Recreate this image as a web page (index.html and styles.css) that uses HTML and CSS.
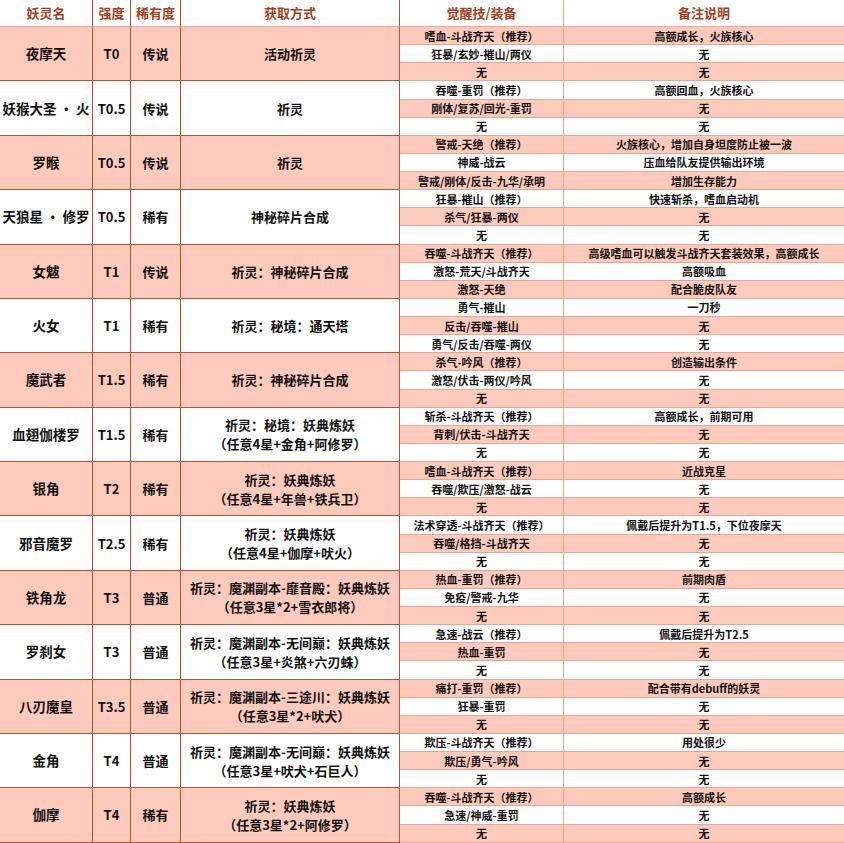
FILE: index.html
```html
<!DOCTYPE html>
<html lang="zh-CN">
<head>
<meta charset="utf-8">
<title>妖灵表</title>
<link rel="stylesheet" href="styles.css">
</head>
<body>
<table class="tbl">
<colgroup>
<col class="c1"><col class="c2"><col class="c3"><col class="c4"><col class="c5"><col class="c6">
</colgroup>
<thead>
<tr class="head">
<th class="dk">妖灵名</th><th class="dk">强度</th><th class="dk">稀有度</th><th class="dk">获取方式</th><th class="lt">觉醒技/装备</th><th class="last">备注说明</th>
</tr>
</thead>
<tbody>
<!-- 1 -->
<tr class="sp"><td rowspan="3" class="g gp name">夜摩天</td><td rowspan="3" class="g gp">T0</td><td rowspan="3" class="g gp">传说</td><td rowspan="3" class="g gp way">活动祈灵</td><td class="sk">嗜血-斗战齐天（推荐）</td><td class="sn">高额成长，火族核心</td></tr>
<tr class="sw"><td class="sk">狂暴/玄妙-摧山/两仪</td><td class="sn">无</td></tr>
<tr class="sp"><td class="sk">无</td><td class="sn">无</td></tr>
<!-- 2 -->
<tr class="sw"><td rowspan="3" class="g gw name">妖猴大圣 · 火</td><td rowspan="3" class="g gw">T0.5</td><td rowspan="3" class="g gw">传说</td><td rowspan="3" class="g gw way">祈灵</td><td class="sk">吞噬-重罚（推荐）</td><td class="sn">高额回血，火族核心</td></tr>
<tr class="sp"><td class="sk">刚体/复苏/回光-重罚</td><td class="sn">无</td></tr>
<tr class="sw"><td class="sk">无</td><td class="sn">无</td></tr>
<!-- 3 -->
<tr class="sp"><td rowspan="3" class="g gp name">罗睺</td><td rowspan="3" class="g gp">T0.5</td><td rowspan="3" class="g gp">传说</td><td rowspan="3" class="g gp way">祈灵</td><td class="sk">警戒-天绝（推荐）</td><td class="sn">火族核心，增加自身坦度防止被一波</td></tr>
<tr class="sw"><td class="sk">神威-战云</td><td class="sn">压血给队友提供输出环境</td></tr>
<tr class="sp"><td class="sk">警戒/刚体/反击-九华/承明</td><td class="sn">增加生存能力</td></tr>
<!-- 4 -->
<tr class="sw"><td rowspan="3" class="g gw name">天狼星 · 修罗</td><td rowspan="3" class="g gw">T0.5</td><td rowspan="3" class="g gw">稀有</td><td rowspan="3" class="g gw way">神秘碎片合成</td><td class="sk">狂暴-摧山（推荐）</td><td class="sn">快速斩杀，嗜血启动机</td></tr>
<tr class="sp"><td class="sk">杀气/狂暴-两仪</td><td class="sn">无</td></tr>
<tr class="sw"><td class="sk">无</td><td class="sn">无</td></tr>
<!-- 5 -->
<tr class="sp"><td rowspan="3" class="g gp name">女魃</td><td rowspan="3" class="g gp">T1</td><td rowspan="3" class="g gp">传说</td><td rowspan="3" class="g gp way">祈灵：神秘碎片合成</td><td class="sk">吞噬-斗战齐天（推荐）</td><td class="sn">高级嗜血可以触发斗战齐天套装效果，高额成长</td></tr>
<tr class="sw"><td class="sk">激怒-荒天/斗战齐天</td><td class="sn">高额吸血</td></tr>
<tr class="sp"><td class="sk">激怒-天绝</td><td class="sn">配合脆皮队友</td></tr>
<!-- 6 -->
<tr class="sw"><td rowspan="3" class="g gw name">火女</td><td rowspan="3" class="g gw">T1</td><td rowspan="3" class="g gw">稀有</td><td rowspan="3" class="g gw way">祈灵：秘境：通天塔</td><td class="sk">勇气-摧山</td><td class="sn">一刀秒</td></tr>
<tr class="sp"><td class="sk">反击/吞噬-摧山</td><td class="sn">无</td></tr>
<tr class="sw"><td class="sk">勇气/反击/吞噬-两仪</td><td class="sn">无</td></tr>
<!-- 7 -->
<tr class="sp"><td rowspan="3" class="g gp name">魔武者</td><td rowspan="3" class="g gp">T1.5</td><td rowspan="3" class="g gp">稀有</td><td rowspan="3" class="g gp way">祈灵：神秘碎片合成</td><td class="sk">杀气-吟风（推荐）</td><td class="sn">创造输出条件</td></tr>
<tr class="sw"><td class="sk">激怒/伏击-两仪/吟风</td><td class="sn">无</td></tr>
<tr class="sp"><td class="sk">无</td><td class="sn">无</td></tr>
<!-- 8 -->
<tr class="sw"><td rowspan="3" class="g gw name">血翅伽楼罗</td><td rowspan="3" class="g gw">T1.5</td><td rowspan="3" class="g gw">稀有</td><td rowspan="3" class="g gw way">祈灵：秘境：妖典炼妖<br>（任意4星+金角+阿修罗）</td><td class="sk">斩杀-斗战齐天（推荐）</td><td class="sn">高额成长，前期可用</td></tr>
<tr class="sp"><td class="sk">背刺/伏击-斗战齐天</td><td class="sn">无</td></tr>
<tr class="sw"><td class="sk">无</td><td class="sn">无</td></tr>
<!-- 9 -->
<tr class="sp"><td rowspan="3" class="g gp name">银角</td><td rowspan="3" class="g gp">T2</td><td rowspan="3" class="g gp">稀有</td><td rowspan="3" class="g gp way">祈灵：妖典炼妖<br>（任意4星+年兽+铁兵卫）</td><td class="sk">嗜血-斗战齐天（推荐）</td><td class="sn">近战克星</td></tr>
<tr class="sw"><td class="sk">吞噬/欺压/激怒-战云</td><td class="sn">无</td></tr>
<tr class="sp"><td class="sk">无</td><td class="sn">无</td></tr>
<!-- 10 -->
<tr class="sw"><td rowspan="3" class="g gw name">邪音魔罗</td><td rowspan="3" class="g gw">T2.5</td><td rowspan="3" class="g gw">稀有</td><td rowspan="3" class="g gw way">祈灵：妖典炼妖<br>（任意4星+伽摩+吠火）</td><td class="sk">法术穿透-斗战齐天（推荐）</td><td class="sn">佩戴后提升为T1.5，下位夜摩天</td></tr>
<tr class="sp"><td class="sk">吞噬/格挡-斗战齐天</td><td class="sn">无</td></tr>
<tr class="sw"><td class="sk">无</td><td class="sn">无</td></tr>
<!-- 11 -->
<tr class="sp"><td rowspan="3" class="g gp name">铁角龙</td><td rowspan="3" class="g gp">T3</td><td rowspan="3" class="g gp">普通</td><td rowspan="3" class="g gp way">祈灵：魔渊副本-靡音殿：妖典炼妖<br>（任意3星*2+雪衣郎将）</td><td class="sk">热血-重罚（推荐）</td><td class="sn">前期肉盾</td></tr>
<tr class="sw"><td class="sk">免疫/警戒-九华</td><td class="sn">无</td></tr>
<tr class="sp"><td class="sk">无</td><td class="sn">无</td></tr>
<!-- 12 -->
<tr class="sw"><td rowspan="3" class="g gw name">罗刹女</td><td rowspan="3" class="g gw">T3</td><td rowspan="3" class="g gw">普通</td><td rowspan="3" class="g gw way">祈灵：魔渊副本-无间巅：妖典炼妖<br>（任意3星+炎煞+六刃蛛）</td><td class="sk">急速-战云（推荐）</td><td class="sn">佩戴后提升为T2.5</td></tr>
<tr class="sp"><td class="sk">热血-重罚</td><td class="sn">无</td></tr>
<tr class="sw"><td class="sk">无</td><td class="sn">无</td></tr>
<!-- 13 -->
<tr class="sp"><td rowspan="3" class="g gp name">八刃魔皇</td><td rowspan="3" class="g gp">T3.5</td><td rowspan="3" class="g gp">普通</td><td rowspan="3" class="g gp way">祈灵：魔渊副本-三途川：妖典炼妖<br>（任意3星*2+吠犬）</td><td class="sk">痛打-重罚（推荐）</td><td class="sn">配合带有debuff的妖灵</td></tr>
<tr class="sw"><td class="sk">狂暴-重罚</td><td class="sn">无</td></tr>
<tr class="sp"><td class="sk">无</td><td class="sn">无</td></tr>
<!-- 14 -->
<tr class="sw"><td rowspan="3" class="g gw name">金角</td><td rowspan="3" class="g gw">T4</td><td rowspan="3" class="g gw">普通</td><td rowspan="3" class="g gw way">祈灵：魔渊副本-无间巅：妖典炼妖<br>（任意3星+吠犬+石巨人）</td><td class="sk">欺压-斗战齐天（推荐）</td><td class="sn">用处很少</td></tr>
<tr class="sp"><td class="sk">欺压/勇气-吟风</td><td class="sn">无</td></tr>
<tr class="sw"><td class="sk">无</td><td class="sn">无</td></tr>
<!-- 15 -->
<tr class="sp"><td rowspan="3" class="g gp name">伽摩</td><td rowspan="3" class="g gp">T4</td><td rowspan="3" class="g gp">稀有</td><td rowspan="3" class="g gp way">祈灵：妖典炼妖<br>（任意3星*2+阿修罗）</td><td class="sk">吞噬-斗战齐天（推荐）</td><td class="sn">高额成长</td></tr>
<tr class="sw"><td class="sk">急速/神威-重罚</td><td class="sn">无</td></tr>
<tr class="sp"><td class="sk">无</td><td class="sn">无</td></tr>
</tbody>
</table>
</body>
</html>
```
FILE: styles.css
```css
html, body {
  margin: 0;
  padding: 0;
  background: #ffffff;
}
body {
  font-family: "Noto Sans CJK SC", "Noto Sans", sans-serif;
  font-weight: 700;
  color: #111111;
  overflow: hidden;
}
.tbl {
  width: 844px;
  table-layout: fixed;
  border-collapse: separate;
  border-spacing: 0;
}
.c1 { width: 93px; }
.c2 { width: 38px; }
.c3 { width: 50px; }
.c4 { width: 219px; }
.c5 { width: 164px; }
.c6 { width: 280px; }

.tbl th, .tbl td {
  padding: 0;
  text-align: center;
  vertical-align: middle;
  white-space: nowrap;
  overflow: hidden;
  box-sizing: border-box;
}
.head th {
  height: 27px;
  font-size: 13px;
  line-height: 16px;
  color: #a6401c;
  background: #ffffff;
  border-bottom: 1px solid #e8a996;
}
.head th.dk { border-right: 1px solid #b9532f; }
.head th.lt { border-right: 1px solid #e3a38f; }

.g {
  font-size: 13px;
  line-height: 17px;
  border-right: 1px solid #b9532f;
  border-bottom: 1px solid #b9532f;
}
.way { line-height: 19px; }
.name { font-size: 13.5px; }
.gp { background: #fdcabb; }
.gw { background: #ffffff; }

.sk, .sn {
  height: 18.13px;
  font-size: 11px;
  line-height: 14px;
  border-bottom: 1px solid #e9a590;
}
.sk { border-right: 1px solid #e3a38f; }
.sp .sk, .sp .sn { background: #fdcabb; }
.sw .sk, .sw .sn { background: #ffffff; }
```
